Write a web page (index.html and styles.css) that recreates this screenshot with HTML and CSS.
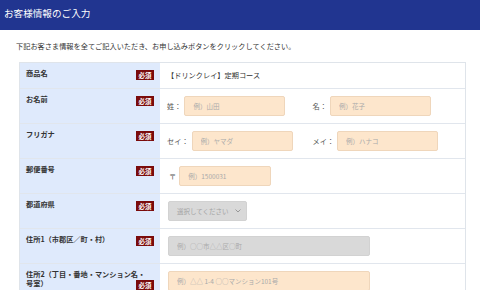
FILE: index.html
```html
<!DOCTYPE html>
<html lang="ja">
<head>
<meta charset="utf-8">
<title>お客様情報のご入力</title>
<link rel="stylesheet" href="styles.css">
</head>
<body>
<header class="head"><h1 class="title">お客様情報のご入力</h1></header>
<p class="intro">下記お客さま情報を全てご記入いただき、お申し込みボタンをクリックしてください。</p>
<div class="form">
  <div class="row">
    <div class="label">商品名<span class="req">必須</span></div>
    <div class="value"><span class="text">【ドリンクレイ】定期コース</span></div>
  </div>
  <div class="row">
    <div class="label">お名前<span class="req">必須</span></div>
    <div class="value">
      <div class="half"><span class="pre">姓：</span><input class="inp w101" placeholder="例）山田"></div>
      <div class="half"><span class="pre">名：</span><input class="inp w101" placeholder="例）花子"></div>
    </div>
  </div>
  <div class="row">
    <div class="label">フリガナ<span class="req">必須</span></div>
    <div class="value">
      <div class="half"><span class="pre">セイ：</span><input class="inp w101" placeholder="例）ヤマダ"></div>
      <div class="half"><span class="pre">メイ：</span><input class="inp w101" placeholder="例）ハナコ"></div>
    </div>
  </div>
  <div class="row">
    <div class="label">郵便番号<span class="req">必須</span></div>
    <div class="value"><span class="pre zip">〒</span><input class="inp w92" placeholder="例）1500031"></div>
  </div>
  <div class="row">
    <div class="label">都道府県<span class="req">必須</span></div>
    <div class="value">
      <div class="select"><span>選択してください</span><svg class="chev" width="6" height="4" viewBox="0 0 6 4"><path d="M0.5 0.5 L3 3 L5.5 0.5" fill="none" stroke="#888" stroke-width="0.8"/></svg></div>
    </div>
  </div>
  <div class="row">
    <div class="label">住所1（市郡区／町・村）<span class="req">必須</span></div>
    <div class="value"><input class="inp grey w202" placeholder="例）○○市△△区○町"></div>
  </div>
  <div class="row">
    <div class="label">住所2（丁目・番地・マンション名・号室）<span class="req">必須</span></div>
    <div class="value"><input class="inp w202" placeholder="例）△△ 1-4 ○○マンション101号"></div>
  </div>
</div>
</body>
</html>
```
FILE: styles.css
```css
* { box-sizing: border-box; }
body {
  margin: 0;
  background: #fff;
  font-family: "Noto Sans CJK JP", "Noto Sans", sans-serif;
  color: #333;
}
.head {
  background: #213590;
  height: 30px;
  padding: 8px 0 0 4px;
}
.title {
  margin: 0;
  font-size: 9.6px;
  line-height: 11px;
  font-weight: normal;
  color: #fff;
}
.intro {
  margin: 0;
  padding: 10px 0 0 16px;
  font-size: 7.2px;
  line-height: 12px;
  color: #333;
}
.form {
  margin: 10px 14px 0 19px;
  border: 1px solid #dfe4ea;
  border-bottom: none;
}
.row {
  display: grid;
  grid-template-columns: 140px 1fr;
  border-bottom: 1px solid #e1e6ed;
}
.label {
  background: #dfeafc;
  padding: 6px 10px 4px 6px;
  font-size: 7.2px;
  line-height: 9px;
  font-weight: bold;
  color: #333;
}
.req {
  float: right;
  width: 18px;
  height: 10px;
  margin: 1px -4px 0 0;
  background: #7a0b0b;
  color: #fff;
  font-size: 6.5px;
  line-height: 10px;
  text-align: center;
  font-weight: bold;
}
.value {
  display: flex;
  align-items: center;
  padding: 7px 7px;
  font-size: 7.2px;
  line-height: 11px;
}
.text { color: #333; }
.half {
  width: 50%;
  display: flex;
  align-items: center;
  gap: 3px;
}
.pre {
  color: #555;
  font-size: 7.2px;
}
.zip { margin: 0 3px 0 2px; }
.inp {
  height: 20px;
  border: 1px solid #efd6bb;
  border-radius: 2px;
  background: #fde6cc;
  padding: 0 0 0 8px;
  font-family: "Noto Sans CJK JP", "Noto Sans", sans-serif;
  font-size: 6.5px;
  color: #333;
  margin: 0;
  outline: none;
}
.inp::placeholder { color: #aaa; }
.inp.grey {
  background: #d9d9d9;
  border-color: #d2d2d2;
}
.w101 { width: 101px; }
.w92 { width: 92px; }
.w202 { width: 202px; margin-left: 1px; }
.select {
  width: 79px;
  height: 20px;
  margin-left: 1px;
  background: #d9d9d9;
  border: 1px solid #d2d2d2;
  border-radius: 2px;
  display: flex;
  align-items: center;
  justify-content: space-between;
  padding: 0 5px 0 8px;
  font-size: 6.5px;
  color: #a3a3a3;
}
.chev { display: block; }
```
